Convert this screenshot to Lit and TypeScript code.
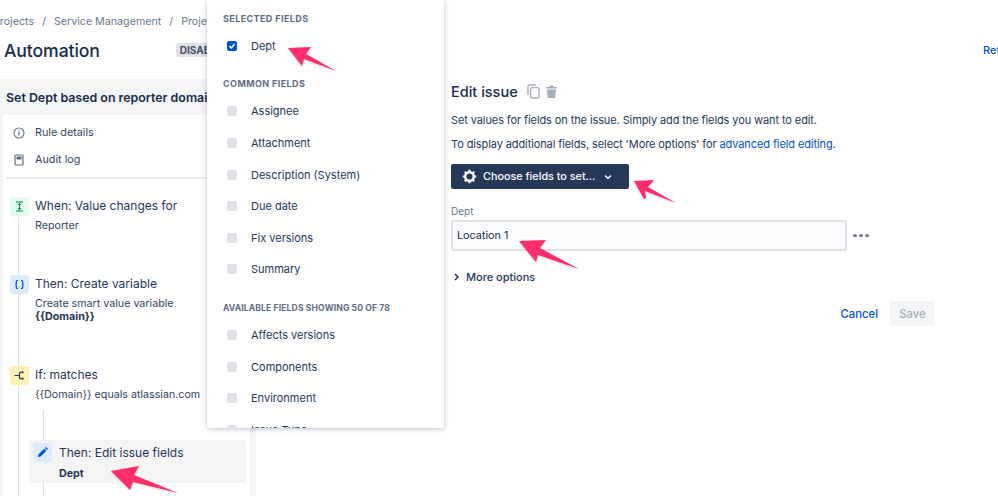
import { LitElement, html, css, svg } from "lit";
import { customElement } from "lit/decorators.js";

const common = ["Assignee", "Attachment", "Description (System)", "Due date", "Fix versions", "Summary"];
const available = ["Affects versions", "Components", "Environment", "Issue Type"];
const arrows = [
  "288,48 311,47 306,54 336,71 304,59 302,66",
  "634,181 654,180 648,187 676,203 645,191 646,198 644,199",
  "519,241 546,240 540,248 579,269 538,255 536,262",
  "111,471 139,466 134,475 178,493 133,482 130,490",
];

@customElement("app-root")
export class AppRoot extends LitElement {
  static styles = css`
    :host { display: block; width: 998px; height: 496px; overflow: hidden; position: relative; background: #fff;
      font-family: Inter, "Liberation Sans", sans-serif; color: #172b4d; font-size: 12px; }
    .header { height: 79px; box-sizing: border-box; padding-top: 14px; overflow: hidden; }
    .crumbs { display: flex; gap: 8px; margin-left: -7px; font-size: 10.7px; color: #6b778c; line-height: 15px; white-space: nowrap; }
    .titlerow { display: flex; align-items: center; margin-top: 6px; height: 30px; padding-left: 4px; white-space: nowrap; }
    h1 { margin: 0; font-size: 17.6px; font-weight: 500; letter-spacing: -0.1px; color: #172b4d; }
    .badge { margin-left: 76px; background: #dfe1e6; color: #42526e; font-size: 10px; font-weight: 700; padding: 1px 4px; border-radius: 3px; }
    .ret { margin-left: auto; margin-right: -50px; color: #0052cc; font-size: 11px; font-weight: 500; width: 65px; }
    .main { display: flex; height: 417px; }
    .side { width: 256px; flex: none; background: #f4f5f7; display: flex; flex-direction: column; box-sizing: border-box; padding: 0 6px 0 3px; }
    .side h2 { margin: 0; flex: none; height: 36px; display: flex; align-items: center; padding-left: 3px; font-size: 12.4px; font-weight: 600; white-space: nowrap; overflow: hidden; }
    .card { flex: 1; min-height: 0; overflow: hidden; background: #fff; border-radius: 4px 4px 0 0; padding-top: 4px; position: relative; }
    .nav { display: flex; align-items: center; gap: 10px; height: 27px; padding-left: 10px; color: #344563; font-size: 10.8px; }
    .nav svg { width: 12px; height: 12px; flex: none; }
    .divider { height: 2px; background: #ebecf0; margin: 4px 0 18px 3px; }
    .flow { position: relative; isolation: isolate; }
    .flow::before { content: ""; position: absolute; left: 15px; top: 20px; bottom: -60px; width: 1px; background: #dfe1e6; }
    .step { display: flex; gap: 6px; padding-left: 7px; position: relative; }
    .ico { width: 19px; height: 19px; flex: none; border-radius: 3px; display: flex; align-items: center; justify-content: center; }
    .ico svg { width: 13px; height: 13px; }
    .green { background: #e3fcef; }
    .blue { background: #deebff; }
    .yellow { background: #fff0b3; }
    .stitle { font-size: 12px; line-height: 18px; color: #253858; white-space: nowrap; }
    .ssub { font-size: 10.7px; line-height: 13px; margin-top: 4px; color: #344563; white-space: nowrap; }
    .ssub b { font-weight: 700; color: #253858; }
    .s2 { margin-top: 43px; }
    .s3 { margin-top: 43px; }
    .nested { position: relative; margin-top: 39px; margin-left: 26px; width: 217px; height: 43px; background: #f4f4f4; border-radius: 3px; box-sizing: border-box; padding: 3px 0 0 4px; display: flex; gap: 7px; }
    .nested::before { content: ""; position: absolute; left: 14px; top: -30px; bottom: -20px; width: 1px; background: #dfe1e6; z-index: -1; }
    .nested .body { margin-top: 1px; }
    .nested .ssub { margin-top: 5px; }
    .edit { padding: 0 0 0 195px; flex: 1; min-width: 0; }
    .edit-head { display: flex; align-items: center; height: 24px; gap: 9px; }
    .edit-head h3 { margin: 0; font-size: 14.5px; font-weight: 500; color: #172b4d; }
    .edit-head svg { width: 13px; height: 15px; }
    .edit-head .icons { display: flex; gap: 5px; }
    .p { font-size: 11px; letter-spacing: -0.1px; line-height: 14px; color: #253858; margin: 0; white-space: nowrap; }
    .p a { color: #0052cc; text-decoration: none; }
    .p1 { margin-top: 10px; }
    .p2 { margin-top: 10px; }
    .choose { margin-top: 13px; width: 178px; height: 25px; box-sizing: border-box; border-radius: 2px; background: #253858; color: #fff; font-size: 10.8px; font-weight: 500; display: flex; align-items: center; padding: 0 0 0 11px; }
    .choose .gear { width: 15px; height: 15px; margin-right: 6px; }
    .choose .chev { width: 8px; height: 6px; margin-left: 9px; }
    .label { margin-top: 16px; font-size: 10px; line-height: 12px; color: #6b778c; }
    .inrow { display: flex; align-items: center; margin-top: 3px; }
    .input { width: 396px; height: 31px; box-sizing: border-box; border: 2px solid #dfe1e6; border-radius: 3px; background: #fafbfc; font-size: 10.8px; color: #172b4d; display: flex; align-items: center; padding-left: 4px; }
    .dots { display: flex; gap: 2px; margin-left: 6px; }
    .dots i { width: 4px; height: 3px; border-radius: 50%; background: #6b778c; }
    .more { display: flex; align-items: center; margin-top: 19px; gap: 7px; padding-left: 3px; font-size: 11px; font-weight: 500; color: #253858; line-height: 14px; }
    .more svg { width: 5px; height: 8px; }
    .actions { display: flex; justify-content: flex-end; align-items: center; width: 484px; margin-top: 17px; gap: 12px; }
    .cancel { color: #0052cc; font-size: 11.3px; font-weight: 500; }
    .save { width: 45px; height: 25px; border-radius: 3px; background: #f4f5f7; color: #a5adba; font-size: 11.3px; font-weight: 500; display: flex; align-items: center; justify-content: center; }
    .pop { position: absolute; left: 207px; top: 0; width: 237px; height: 428px; background: #fff; overflow: hidden; border-radius: 0 0 3px 3px; box-shadow: 0 1px 5px rgba(9,30,66,.28); box-sizing: border-box; padding: 0 0 0 16px; }
    .pop h4 { margin: 0; font-size: 9px; line-height: 12px; font-weight: 700; letter-spacing: .4px; color: #5e6c84; white-space: nowrap; }
    .pop .h1 { padding-top: 13px; }
    .pop .h2 { padding-top: 16px; margin-bottom: 1px; }
    .pop .h3 { padding-top: 17px; font-size: 8.6px; letter-spacing: .12px; }
    .rows { padding-top: 5px; }
    .row { display: flex; align-items: center; height: 31.6px; padding-left: 4px; gap: 14px; font-size: 11px; color: #253858; white-space: nowrap; }
    .box { width: 10px; height: 10px; flex: none; border-radius: 2px; background: #dfe1e6; display: flex; align-items: center; justify-content: center; }
    .box.on { background: #0052cc; }
    .box svg { width: 8px; height: 8px; }
    .arrows { position: absolute; left: 0; top: 0; width: 998px; height: 496px; pointer-events: none; filter: drop-shadow(0 1px 1px rgba(9,30,66,.2)); }
  `;

  render() {
    return html`
      <div class="header">
        <div class="crumbs"><span>Projects</span><span>/</span><span>Service Management</span><span>/</span><span>Project settings</span></div>
        <div class="titlerow"><h1>Automation</h1><span class="badge">DISABLED</span><span class="ret">Return to list</span></div>
      </div>
      <div class="main">
        <div class="side">
          <h2>Set Dept based on reporter domain</h2>
          <div class="card">
            <div class="nav">
              <svg viewBox="0 0 12 12"><circle cx="6" cy="6" r="5" fill="none" stroke="#5e6c84" stroke-width="1.1"/><rect x="5.4" y="5.2" width="1.2" height="3.4" fill="#5e6c84"/><rect x="5.4" y="3.2" width="1.2" height="1.2" fill="#5e6c84"/></svg>
              <span>Rule details</span>
            </div>
            <div class="nav">
              <svg viewBox="0 0 12 12"><rect x="2" y="1" width="8" height="10" rx="1" fill="none" stroke="#5e6c84" stroke-width="1.2"/><rect x="3.5" y="2.5" width="5" height="3" fill="#5e6c84"/></svg>
              <span>Audit log</span>
            </div>
            <div class="divider"></div>
            <div class="flow">
              <div class="step">
                <span class="ico green"><svg viewBox="0 0 13 13"><path d="M3 2h7M3 11h7" stroke="#00875a" stroke-width="1.2"/><path d="M6.5 3v7" stroke="#00875a" stroke-width="1"/><path d="M4.5 5L6.5 3l2 2zM4.5 8l2 2 2-2z" fill="#00875a"/></svg></span>
                <div><div class="stitle">When: Value changes for</div><div class="ssub">Reporter</div></div>
              </div>
              <div class="step s2">
                <span class="ico blue"><svg viewBox="0 0 13 13"><path d="M5 2.5H4.3c-.7 0-1 .4-1 1v2c0 .6-.4 1-1 1 .6 0 1 .4 1 1v2c0 .6.3 1 1 1H5M8 2.5h.7c.7 0 1 .4 1 1v2c0 .6.4 1 1 1-.6 0-1 .4-1 1v2c0 .6-.3 1-1 1H8" fill="none" stroke="#0052cc" stroke-width="1.2"/></svg></span>
                <div><div class="stitle">Then: Create variable</div><div class="ssub">Create smart value variable<br /><b>{{Domain}}</b></div></div>
              </div>
              <div class="step s3">
                <span class="ico yellow"><svg viewBox="0 0 13 13"><path d="M1.5 6.5h5M6.5 6.5V4.2c0-.6.3-.9.9-.9h1.2M6.5 6.5v2.3c0 .6.3.9.9.9h1.2" fill="none" stroke="#253858" stroke-width="1.2"/><circle cx="9.6" cy="3.3" r="1.1" fill="#253858"/><circle cx="9.6" cy="9.7" r="1.1" fill="#253858"/></svg></span>
                <div><div class="stitle">If: matches</div><div class="ssub">{{Domain}} equals atlassian.com</div></div>
              </div>
              <div class="nested">
                <span class="ico blue"><svg viewBox="0 0 13 13"><path d="M2 11l.6-2.7 5.6-5.6 2.1 2.1-5.6 5.6zM8.9 2l1-1 2.1 2.1-1 1z" fill="#0052cc"/></svg></span>
                <div class="body"><div class="stitle">Then: Edit issue fields</div><div class="ssub"><b>Dept</b></div></div>
              </div>
            </div>
          </div>
        </div>
        <div class="edit">
          <div class="edit-head">
            <h3>Edit issue</h3>
            <span class="icons">
              <svg viewBox="0 0 13 15"><path d="M1 11V2.5C1 1.7 1.7 1 2.5 1H9" fill="none" stroke="#a5adba" stroke-width="1.3"/><rect x="3.6" y="3.6" width="8.4" height="10.4" rx="1.2" fill="none" stroke="#a5adba" stroke-width="1.3"/></svg>
              <svg viewBox="0 0 13 15"><path d="M1 3h11v1.4H1zM4.5 1.4h4V3h-4zM2 5.4h9L10.2 14H2.8z" fill="#a5adba"/></svg>
            </span>
          </div>
          <p class="p p1">Set values for fields on the issue. Simply add the fields you want to edit.</p>
          <p class="p p2">To display additional fields, select 'More options' for <a>advanced field editing</a>.</p>
          <div class="choose">
            <svg class="gear" viewBox="0 0 15 15"><circle cx="7.5" cy="7.5" r="4.3" fill="none" stroke="#fff" stroke-width="2.4"/><path d="M7.5 .8v2.7M7.5 11.5v2.7M.8 7.5h2.7M11.5 7.5h2.7M2.8 2.8l1.9 1.9M10.3 10.3l1.9 1.9M2.8 12.2l1.9-1.9M10.3 4.7l1.9-1.9" stroke="#fff" stroke-width="2.2"/></svg>
            <span>Choose fields to set...</span>
            <svg class="chev" viewBox="0 0 8 6"><path d="M1 1.5l3 3 3-3" fill="none" stroke="#fff" stroke-width="1.5"/></svg>
          </div>
          <div class="label">Dept</div>
          <div class="inrow"><div class="input">Location 1</div><span class="dots"><i></i><i></i><i></i></span></div>
          <div class="more"><svg viewBox="0 0 5 8"><path d="M1 1l3 3-3 3" fill="none" stroke="#172b4d" stroke-width="1.4"/></svg><span>More options</span></div>
          <div class="actions"><span class="cancel">Cancel</span><span class="save">Save</span></div>
        </div>
      </div>
      <div class="pop">
        <h4 class="h1">SELECTED FIELDS</h4>
        <div class="rows"><div class="row"><span class="box on"><svg viewBox="0 0 8 8"><path d="M1.3 4l2 2 3.4-4" fill="none" stroke="#fff" stroke-width="1.5"/></svg></span>Dept</div></div>
        <h4 class="h2">COMMON FIELDS</h4>
        <div class="rows">${common.map((c) => html`<div class="row"><span class="box"></span>${c}</div>`)}</div>
        <h4 class="h3">AVAILABLE FIELDS SHOWING 50 OF 78</h4>
        <div class="rows">${available.map((c) => html`<div class="row"><span class="box"></span>${c}</div>`)}</div>
      </div>
      <svg class="arrows" viewBox="0 0 998 496">${arrows.map((p) => svg`<polygon points=${p} fill="#ff2d6b"/>`)}</svg>
    `;
  }
}
